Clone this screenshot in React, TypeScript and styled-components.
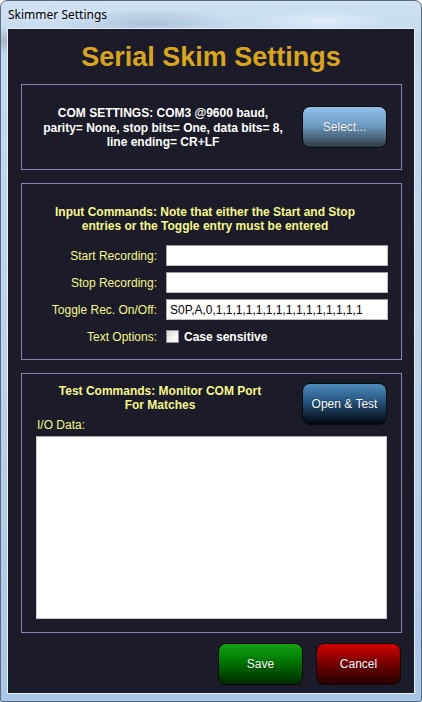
import React from "react";
import styled, { createGlobalStyle } from "styled-components";

const Global = createGlobalStyle`
  html, body { margin: 0; padding: 0; background: #ffffff; }
  #root { width: 422px; height: 702px; }
`;

const Frame = styled.div`
  box-sizing: border-box;
  width: 422px;
  height: 702px;
  border: 1px solid #5b6b7c;
  border-radius: 7px 7px 2px 2px;
  background:
    radial-gradient(ellipse 90px 14px at 150px 22px, rgba(150,175,200,0.55), rgba(150,175,200,0) 100%),
    radial-gradient(ellipse 70px 10px at 320px 20px, rgba(235,245,255,0.7), rgba(235,245,255,0) 100%),
    radial-gradient(ellipse 50px 14px at 12px 40px, rgba(130,150,170,0.5), rgba(130,150,170,0) 100%),
    linear-gradient(180deg, #cfe1f3 0%, #c3d9ee 6%, #b8d1ea 60%, #a8c7e6 100%);
  display: flex;
  flex-direction: column;
  padding: 0 6px 7px 6px;
  font-family: "Liberation Sans", Arial, sans-serif;
`;

const TitleBar = styled.div`
  height: 27px;
  display: flex;
  align-items: center;
  padding-left: 1px;
  font-family: "Noto Sans", "Open Sans", sans-serif;
  font-size: 12px;
  color: #000000;
  text-shadow: 0 0 6px rgba(255,255,255,0.9);
`;

const Panel = styled.div`
  flex: 1;
  border: 1px solid #e9f0f7;
  background: #1c1b2a;
  display: flex;
  flex-direction: column;
`;

const Heading = styled.h1`
  margin: 0;
  height: 55px;
  padding-top: 1px;
  box-sizing: border-box;
  display: flex;
  align-items: center;
  justify-content: center;
  font-family: "Liberation Sans", Arial, sans-serif;
  font-weight: bold;
  font-size: 27px;
  color: #d9a521;
`;

const Group = styled.div<{ $h: number; $gapTop?: number }>`
  box-sizing: border-box;
  width: 381px;
  height: ${(p) => p.$h}px;
  margin: ${(p) => p.$gapTop ?? 0}px 0 0 13px;
  border: 1px solid #8784b3;
`;

const ComGroup = styled(Group)`
  display: grid;
  grid-template-columns: 262px 85px;
  column-gap: 8px;
  align-items: center;
  padding-left: 10px;
`;

const ComText = styled.div`
  color: #ffffff;
  font-weight: bold;
  font-size: 12px;
  line-height: 14.5px;
  text-align: center;
  padding-top: 2px;
`;

const GlossButton = styled.button<{ $top: string; $mid: string; $bottom: string }>`
  box-sizing: border-box;
  width: 85px;
  height: 42px;
  border: 1px solid #0a0a0a;
  border-radius: 8px;
  background: linear-gradient(180deg, ${(p) => p.$top} 0%, ${(p) => p.$mid} 45%, ${(p) => p.$bottom} 100%);
  color: #ffffff;
  font-family: "Liberation Sans", Arial, sans-serif;
  font-size: 12px;
  text-shadow: 0 0 1px rgba(0,0,0,0.6);
  padding: 0;
  cursor: pointer;
`;

const InputGroup = styled(Group)`
  display: flex;
  flex-direction: column;
  padding: 21px 13px 0 0;
`;

const YellowTitle = styled.div`
  color: #f7f78a;
  font-weight: bold;
  font-size: 12px;
  line-height: 14px;
  text-align: center;
`;

const FieldGrid = styled.div`
  margin-top: 12px;
  display: grid;
  grid-template-columns: 135px 222px;
  column-gap: 9px;
  row-gap: 6px;
  grid-auto-rows: 21px;
  align-items: center;
`;

const Label = styled.label`
  color: #f7f78a;
  font-size: 12px;
  text-align: right;
`;

const TextField = styled.input`
  box-sizing: border-box;
  width: 222px;
  height: 21px;
  border: 1px solid #bdbdbd;
  border-top-color: #9a9a9a;
  border-left-color: #a8a8a8;
  background: #ffffff;
  font-family: "Liberation Sans", Arial, sans-serif;
  font-size: 12px;
  color: #000000;
  padding: 1px 3px 0 3px;
  outline: none;
`;

const CheckRow = styled.div`
  display: flex;
  align-items: center;
  gap: 5px;
`;

const CheckBox = styled.span`
  box-sizing: border-box;
  width: 13px;
  height: 13px;
  border: 1px solid #8e8f8f;
  background: linear-gradient(135deg, #dcdcdc 0%, #f4f4f4 60%, #ffffff 100%);
`;

const CheckText = styled.span`
  color: #ffffff;
  font-weight: bold;
  font-size: 12px;
`;

const TestGroup = styled(Group)`
  display: grid;
  grid-template-columns: 248px 85px;
  grid-template-rows: auto auto 1fr;
  column-gap: 18px;
  padding: 10px 13px 13px 14px;
`;

const TestTitle = styled(YellowTitle)`
  grid-column: 1;
  grid-row: 1;
`;

const TestButtonSlot = styled.div`
  grid-column: 2;
  grid-row: 1 / span 2;
  margin-top: -1px;
`;

const IoLabel = styled.div`
  grid-column: 1;
  grid-row: 2;
  margin-top: 6px;
  padding-left: 1px;
  color: #f7f78a;
  font-size: 12px;
  line-height: 14px;
`;

const IoArea = styled.textarea`
  grid-column: 1 / span 2;
  grid-row: 3;
  margin-top: 4px;
  box-sizing: border-box;
  width: 351px;
  height: 183px;
  border: 1px solid #c9c9c9;
  border-top-color: #a9a9a9;
  background: #ffffff;
  resize: none;
  outline: none;
`;

const Footer = styled.div`
  display: flex;
  justify-content: flex-end;
  gap: 13px;
  padding: 10px 13px 0 0;
`;

export default function App() {
  return (
    <>
      <Global />
      <Frame>
        <TitleBar>Skimmer Settings</TitleBar>
        <Panel>
          <Heading>Serial Skim Settings</Heading>
          <ComGroup $h={86}>
            <ComText>
              COM SETTINGS: COM3 @9600 baud,
              <br />
              parity= None, stop bits= One, data bits= 8,
              <br />
              line ending= CR+LF
            </ComText>
            <GlossButton $top="#91c0ea" $mid="#6f9cc4" $bottom="#2e3a46">
              Select...
            </GlossButton>
          </ComGroup>
          <InputGroup $h={177} $gapTop={13}>
            <YellowTitle>
              Input Commands: Note that either the Start and Stop
              <br />
              entries or the Toggle entry must be entered
            </YellowTitle>
            <FieldGrid>
              <Label>Start Recording:</Label>
              <TextField defaultValue="" />
              <Label>Stop Recording:</Label>
              <TextField defaultValue="" />
              <Label>Toggle Rec. On/Off:</Label>
              <TextField defaultValue="S0P,A,0,1,1,1,1,1,1,1,1,1,1,1,1,1,1,1" />
              <Label>Text Options:</Label>
              <CheckRow>
                <CheckBox />
                <CheckText>Case sensitive</CheckText>
              </CheckRow>
            </FieldGrid>
          </InputGroup>
          <TestGroup $h={260} $gapTop={13}>
            <TestTitle>
              Test Commands: Monitor COM Port
              <br />
              For Matches
            </TestTitle>
            <TestButtonSlot>
              <GlossButton $top="#4f8cc0" $mid="#24527a" $bottom="#02070e">
                Open &amp; Test
              </GlossButton>
            </TestButtonSlot>
            <IoLabel>I/O Data:</IoLabel>
            <IoArea />
          </TestGroup>
          <Footer>
            <GlossButton $top="#14a314" $mid="#007400" $bottom="#002a00">
              Save
            </GlossButton>
            <GlossButton $top="#d10000" $mid="#7a0000" $bottom="#240000">
              Cancel
            </GlossButton>
          </Footer>
        </Panel>
      </Frame>
    </>
  );
}
